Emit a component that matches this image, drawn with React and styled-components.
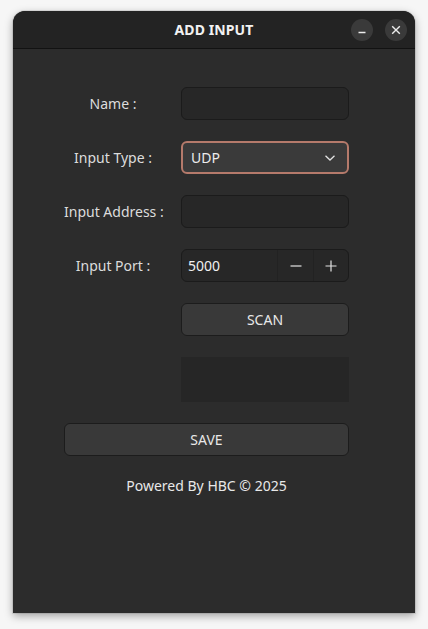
import React, { useState } from 'react';
import styled, { createGlobalStyle } from 'styled-components';

const GlobalStyle = createGlobalStyle`
  html, body {
    margin: 0;
    padding: 0;
    background: #f6f6f6;
  }
  body {
    font-family: "Noto Sans", "DejaVu Sans", sans-serif;
    font-size: 14px;
    color: #e4e4e4;
  }
`;

const Page = styled.div`
  padding: 11px 13px 16px 13px;
`;

const Window = styled.div`
  width: 402px;
  height: 602px;
  background: #2c2c2c;
  border-radius: 12px 12px 0 0;
  box-shadow: 0 3px 9px rgba(0, 0, 0, 0.35), 0 0 0 1px rgba(0, 0, 0, 0.08);
  display: flex;
  flex-direction: column;
  overflow: hidden;
`;

const TitleBar = styled.div`
  height: 37px;
  background: #232323;
  border-bottom: 1px solid #121212;
  display: grid;
  grid-template-columns: 1fr auto 1fr;
  align-items: center;
`;

const Title = styled.div`
  grid-column: 2;
  font-weight: 700;
  font-size: 14px;
  color: #f2f2f2;
  letter-spacing: 0.1px;
`;

const Controls = styled.div`
  grid-column: 3;
  justify-self: end;
  display: flex;
  gap: 12px;
  padding-right: 8px;
`;

const RoundButton = styled.button`
  width: 22px;
  height: 22px;
  border-radius: 50%;
  border: none;
  padding: 0;
  background: #3a3a3a;
  color: #e8e8e8;
  display: flex;
  align-items: center;
  justify-content: center;
  cursor: pointer;
`;

const Body = styled.div`
  padding: 38px 66px 0 51px;
  display: flex;
  flex-direction: column;
`;

const Form = styled.div`
  display: grid;
  grid-template-columns: 98px 168px;
  column-gap: 19px;
  row-gap: 21px;
  align-items: center;
`;

const Label = styled.label`
  text-align: center;
  color: #dcdcdc;
  white-space: nowrap;
`;

const TextField = styled.input`
  box-sizing: border-box;
  height: 33px;
  width: 100%;
  background: #272727;
  border: 1px solid #1b1b1b;
  border-radius: 6px;
  color: #eee;
  font: inherit;
  padding: 0 8px;
  outline: none;
`;

const Select = styled.div`
  box-sizing: border-box;
  height: 33px;
  background: #3a3a3a;
  border: 2px solid #b57a6b;
  border-radius: 6px;
  display: flex;
  align-items: center;
  justify-content: space-between;
  padding: 0 11px 0 8px;
  color: #ececec;
`;

const Spin = styled.div`
  box-sizing: border-box;
  height: 33px;
  background: #272727;
  border: 1px solid #1b1b1b;
  border-radius: 6px;
  display: grid;
  grid-template-columns: 1fr 36px 35px;
  align-items: stretch;
`;

const SpinValue = styled.div`
  display: flex;
  align-items: center;
  padding-left: 6px;
  color: #f0f0f0;
`;

const SpinButton = styled.button`
  border: none;
  border-left: 1px solid #222;
  background: transparent;
  color: #e6e6e6;
  display: flex;
  align-items: center;
  justify-content: center;
  padding: 0;
  cursor: pointer;
`;

const Button = styled.button`
  box-sizing: border-box;
  height: 33px;
  width: 100%;
  grid-column: ${(p) => (p.$wide ? '1 / span 2' : '2')};
  background: #393939;
  border: 1px solid #1c1c1c;
  border-radius: 6px;
  color: #e8e8e8;
  font: inherit;
  cursor: pointer;
`;

const ResultBox = styled.div`
  grid-column: 2;
  height: 45px;
  background: #262626;
`;

const Footer = styled.div`
  margin-top: 20px;
  width: 285px;
  text-align: center;
  line-height: 20px;
  color: #e8e8e8;
`;

function Chevron() {
  return (
    <svg width="12" height="8" viewBox="0 0 12 8" fill="none">
      <path d="M1.5 1.8 L6 6 L10.5 1.8" stroke="#e0e0e0" strokeWidth="1.3" />
    </svg>
  );
}

export default function App() {
  const [port, setPort] = useState(5000);

  return (
    <>
      <GlobalStyle />
      <Page>
        <Window>
          <TitleBar>
            <Title>ADD INPUT</Title>
            <Controls>
              <RoundButton aria-label="minimize">
                <svg width="10" height="10" viewBox="0 0 10 10">
                  <path d="M1.5 7.5 H8.5" stroke="#ececec" strokeWidth="1.4" />
                </svg>
              </RoundButton>
              <RoundButton aria-label="close">
                <svg width="10" height="10" viewBox="0 0 10 10">
                  <path d="M1.2 1.2 L8.8 8.8 M8.8 1.2 L1.2 8.8" stroke="#ececec" strokeWidth="1.4" />
                </svg>
              </RoundButton>
            </Controls>
          </TitleBar>
          <Body>
            <Form>
              <Label>Name :</Label>
              <TextField />

              <Label>Input Type :</Label>
              <Select>
                <span>UDP</span>
                <Chevron />
              </Select>

              <Label>Input Address :</Label>
              <TextField />

              <Label>Input Port :</Label>
              <Spin>
                <SpinValue>{port}</SpinValue>
                <SpinButton onClick={() => setPort(port - 1)}>
                  <svg width="12" height="12" viewBox="0 0 12 12">
                    <path d="M0.5 6 H11.5" stroke="#e4e4e4" strokeWidth="1.2" />
                  </svg>
                </SpinButton>
                <SpinButton onClick={() => setPort(port + 1)}>
                  <svg width="12" height="12" viewBox="0 0 12 12">
                    <path d="M0.5 6 H11.5 M6 0.5 V11.5" stroke="#e4e4e4" strokeWidth="1.2" />
                  </svg>
                </SpinButton>
              </Spin>

              <Button>SCAN</Button>
              <ResultBox />
              <Button $wide>SAVE</Button>
            </Form>
            <Footer>Powered By HBC © 2025</Footer>
          </Body>
        </Window>
      </Page>
    </>
  );
}
